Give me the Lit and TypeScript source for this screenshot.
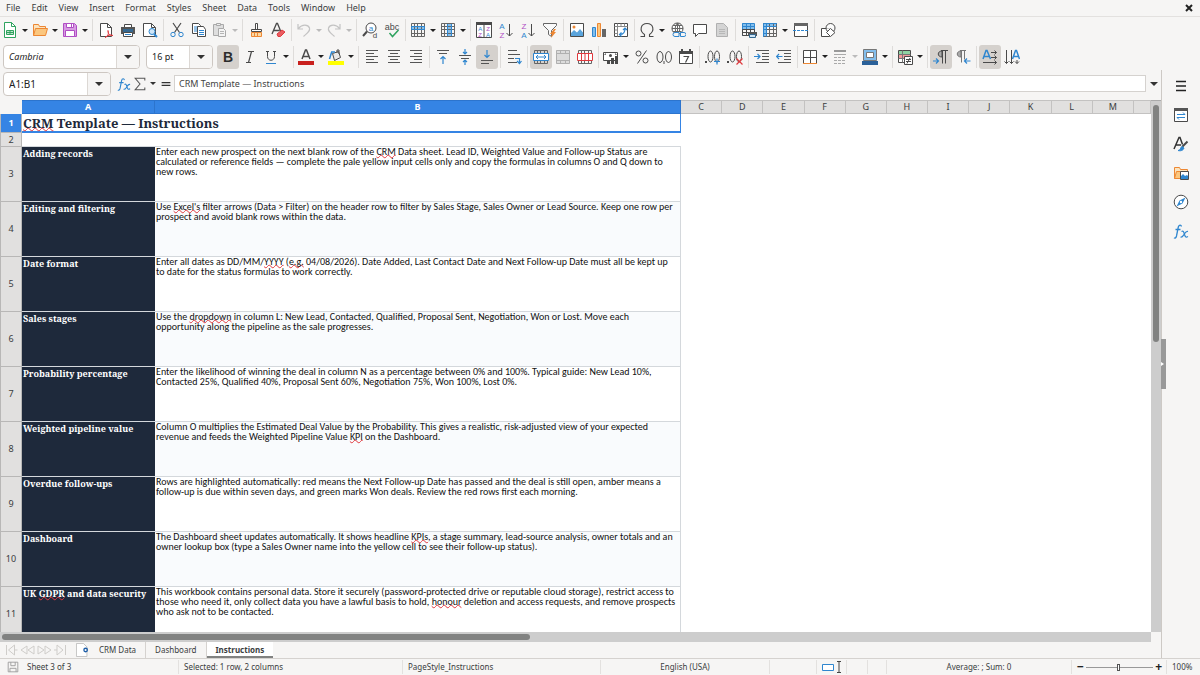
import { LitElement, html, css, svg, nothing } from "lit";
import { customElement, property } from "lit/decorators.js";
import { classMap } from "lit/directives/class-map.js";

const K = "#4a4a4a";
const B = "#2f86cf";
const L = "#83beec";
const P = "#b04ec4";
const O = "#ed8733";
const R = "#e0393e";
const G = "#2fa35f";

const line = (d: string, c = K, w = 1) =>
  svg`<path d=${d} fill="none" stroke=${c} stroke-width=${w} />`;
const fill = (d: string, c = K) => svg`<path d=${d} fill=${c} />`;
const shape = (d: string, f: string, c = K) =>
  svg`<path d=${d} fill=${f} stroke=${c} />`;
const grid = (c = "#666") =>
  line("M1.5 1.5h13v13h-13zM1.5 4.5h13M1.5 7.5h13M1.5 11.5h13M4.5 1.5v13M7.5 1.5v13M11.5 1.5v13", c);
const glyph = (t: string, x: number, y: number, s: number, c = K, weight = 400) =>
  svg`<text x=${x} y=${y} font-size=${s} fill=${c} font-family="Liberation Sans, sans-serif" font-weight=${weight} text-anchor="middle">${t}</text>`;

const ICONS: Record<string, unknown> = {
  new: [shape("M2.5.5h7l4 4v11h-11z", "#fff", G), line("M9.5.5v4h4", G), shape("M4.5 8.5h7v4h-7z", "#bfe6cc", G), line("M4.5 10.5h7M8 8.5v4", G)],
  open: [shape("M1.5 13.5v-11h5l1 2h6v2", "#fbe3bd", O), shape("M1.5 13.5l2-7h12l-2 7z", "#fbc77f", O)],
  save: [shape("M1.5 1.5h11l2 2v11h-13z", "#d79be2", P), shape("M4.5 1.5h7v4h-7z", "#fff", P), shape("M3.5 8.5h9v6h-9z", "#fff", P), line("M9.5 2v3", P)],
  pdf: [shape("M2.5 1.5h7l4 4v9h-11z", "#fff"), line("M9.5 1.5v4h4"), line("M7 15.5c3-1 4-4 3-7 0 4 2 5 5 5-3-1-5-.5-8 2z", R)],
  print: [shape("M4.5 2.5h7v3h-7z", "#fff"), fill("M1 5h14v7H1z", "#555"), fill("M3 7h10v3H3z", "#35688f"), shape("M3.5 10.5h9v4h-9z", "#fff"), line("M5 12.5h6", B)],
  preview: [shape("M1.5 1.5h8l4 4v9h-12z", "#fff"), line("M9.5 1.5v4h4"), svg`<circle cx="10" cy="9.5" r="3" fill="#cfe6f8" stroke=${B} />`, line("M12 12l3 3", B, 2)],
  cut: [line("M4 1l6.5 9.5M12 1L5.5 10.5", K, 1.2), svg`<circle cx="4" cy="12.5" r="2.2" fill="none" stroke=${B} /><circle cx="12" cy="12.5" r="2.2" fill="none" stroke=${B} />`],
  copy: [shape("M1.5 1.5h6l2 2v8h-8z", "#fff"), line("M3 5h4M3 7h4M3 9h3", B), shape("M6.5 4.5h6l2 3v7h-8z", "#fff"), line("M8 8.5h5M8 10.5h5M8 12.5h5", B)],
  paste: [shape("M1.5 2.5h10v11h-10z", "#dedede", "#a9a9a9"), shape("M4.5 1.5h4v2h-4z", "#eee", "#a9a9a9"), shape("M6.5 6.5h5l2 2v6h-7z", "#f4f4f4", "#a9a9a9"), line("M8 9.5h4M8 11.5h4", "#b5b5b5")],
  brush: [shape("M7.5 1.5h2v6h-2z", "#fff"), shape("M3.5 7.5h10v2h-10z", "#fff"), shape("M3.5 10.5v4h10v-4z", "#fbd9a5", O), line("M6.5 11v3M9.5 11v3", O)],
  clear: [line("M2 12L6.5 1.5h1L11 10M3.5 8.5h6", K, 1.3), shape("M7 12l5-4 3 2-4.5 4.5h-2.5z", "#ea5d61", R)],
  undo: [line("M2 2v5h5M2.5 6.5C6 2 12 2 13.5 6c.8 3-1.5 4.500-6 8.500", "#c3c3c3", 1.2)],
  redo: [line("M14 2v5H9M13.5 6.5C10 2 4 2 2.5 6c-.8 3 1.500 4.500 6 8.500", "#c3c3c3", 1.2)],
  find: [svg`<circle cx="9" cy="6" r="5" fill="#fff" stroke=${K} />`, line("M5 9.5L1 14", K, 2), glyph("a", 9, 8.5, 8, B), glyph("d", 13, 15.5, 8, K)],
  spell: [glyph("abc", 8, 7.5, 9, K), line("M5.5 11l3 3.5L14.5 8", G, 1.5)],
  row: [fill("M1 4h14v4H1z", L), grid(), line("M1.5 4.5h13v3h-13z", B)],
  col: [fill("M7 1h5v14H7z", L), grid(), line("M7.5 2v12M11.5 2v12", B)],
  sort: [shape("M.5.5h15v15H.5z", "#fff"), fill("M0 0h16v3H0z"), line("M8 1v14"), glyph("A", 4.2, 9, 6, B), glyph("Z", 4.2, 15, 6, P), glyph("Z", 12, 9, 6, P), glyph("A", 12, 15, 6, B)],
  asc: [glyph("A", 4, 7, 8, B), glyph("Z", 4, 15.5, 8, P), line("M11.5 2v12M8.5 11l3 3 3-3")],
  desc: [glyph("Z", 4, 7, 8, P), glyph("A", 4, 15.5, 8, B), line("M11.5 2v12M8.5 11l3 3 3-3")],
  filter: [shape("M1.5 1.5h13v2l-5 5v6l-3-2v-4l-5-5z", "#fafafa", "#666"), fill("M12 7l-4 5h2l-1 4 5-6h-2l2-3z", O)],
  image: [shape("M1.5 1.5h13v13h-13z", "#fff"), fill("M2 14v-3l3-3 3 2.5L11 7l3 3.5V14z", "#5aa4dc"), svg`<circle cx="5" cy="5" r="1.5" fill=${O} />`],
  chart: [shape("M1.5 5.5h3v9h-3z", L, B), shape("M6.5 1.5h3v13h-3z", "#fbc77f", O), fill("M11 7h4v8h-4z", "#666")],
  pivot: [shape("M1.5 1.5h13v13h-13z", "#fff"), line("M1.5 4.5h13M4.5 1.5v13M8 1.5v3M11.5 1.5v3M1.5 8h3M1.5 11.5h3", "#888"), line("M7 12.5c4 0 5-2 5-6M10 8l2-2 2 2M8.5 10.5l-2 2 2 2", B, 1.2)],
  omega: [line("M1.5 14.5h4v-2C0 9 1.5 1.5 8 1.5S16 9 10.5 12.5v2h4", K, 1.1)],
  link: [svg`<circle cx="7.5" cy="6.5" r="5.5" fill="#fff" stroke=${K} />`, line("M7.5 1v11M2 6.5h11M3 3.5h9M3 9.5h8M7.5 1c-3 3-3 8 0 11M7.5 1c3 3 3 8 0 11", "#666"), shape("M5 10.5h4v4H5a2 2 0 010-4zM10.500 10.500H14a2 2 0 010 4h-3.500z", "#f6f5f4", B)],
  comment: [shape("M1.5 2.5h13v9h-8l-3 3v-3h-2z", "#fff")],
  hf: [shape("M2.5 1.5h7l4 4v9h-11z", "#d4d4d4", "#b0b0b0"), line("M5 7.5h6M5 9.5h6M5 11.5h6", "#b8b8b8")],
  area: [fill("M1 1h12v6H1z", L), line("M1.5 1.5h12v12h-12zM1.5 4.5h12M5.5 1.5v12M9.5 1.5v12", B), line("M1.5 7.5h12v6h-12zM1.5 10.5h12M5.5 8v6M9.5 8v6"), fill("M7 10h9v4H7z", "#555"), shape("M8.5 12.5h6v3h-6z", "#cfe6f8", "#35688f")],
  freeze: [fill("M1 1h14v4H1z", L), fill("M1 1h4v14H1z", L), grid(), line("M1.5 15V1.5H15M1.5 4.5h13M4.5 1.5v13M1.5 7.5h3M1.5 11.5h3", B)],
  split: [shape("M1.5 1.5h13v13h-13z", "#fff"), fill("M1 1h14v3H1z", "#666"), svg`<path d="M0 8.5h16" stroke=${B} stroke-dasharray="3 1" />`],
  shapes: [shape("M1.5 6.5h8v8h-8z", "#fff"), svg`<circle cx="10.5" cy="6" r="4.5" fill="#fff" fill-opacity=".7" stroke=${K} />`, shape("M10.5 6.5l4.5 4-4.5 4-4-4z", "#fff")],
  bold: [glyph("B", 8, 13, 14, "#2c2c2c", 700)],
  italic: [line("M6 2.5h6M4 13.5h5M9.5 2.5l-3 11", K, 1.2)],
  under: [line("M4.5 2v5.500c0 5 7 5 7 0V2M3 2.500h3M10 2.500h3"), line("M3 14.5h10", B)],
  fcolor: [line("M4 10L7.5 1h1L12 10M5.2 7.5h5.6", K, 1.5), fill("M0 12h16v4H0z", "#c9211e")],
  bcolor: [shape("M4.5 4.5l6-2 2 6-6 3z", "#e8e8e8"), line("M9 4V1h2v4"), line("M3.5 3.5L1.5 10M3 3h4", B, 1.5), fill("M0 12h16v4H0z", "#ff0")],
  left: [line("M2 1.5h12M2 4.5h8M2 7.5h12M2 10.5h8M2 13.5h12", "#555")],
  center: [line("M2 1.5h12M4 4.5h8M2 7.5h12M4 10.5h8M2 13.5h12", "#555")],
  right: [line("M2 1.5h12M6 4.5h8M2 7.5h12M6 10.5h8M2 13.5h12", "#555")],
  top: [line("M2 1.5h12M4 4.5h8", "#555"), line("M8 15V7.5M5.5 10L8 7.5l2.5 2.5", B, 1.2)],
  middle: [line("M2 6.5h12M4 9.5h8", "#555"), line("M8 0v5M6 3l2 2 2-2M8 16v-5M6 13l2-2 2 2", B, 1.2)],
  bottom: [line("M2 11.5h12M2 14.5h8", "#555"), line("M8 1v7.5M5.5 6L8 8.5 10.5 6", B, 1.2)],
  wrap: [line("M2 1.5h9M2 5.5h12M2 9.5h6M2 13.5h9", "#555"), line("M9 9.5h4.5V14M11 12l2.5 2.5L15.5 12", B, 1.2)],
  merge: [grid(), shape("M.5 4.5h15v7H.5z", "#fff", B), line("M3 8h10M5 6L3 8l2 2M11 6l2 2-2 2", B)],
  mergec: [fill("M1 1h14v14H1z", "#dcdcdc"), line("M1.5 1.5h13v13h-13zM1.5 4.5h13M1.5 11.5h13M5.5 1.5v3M10.5 1.5v3M5.5 11.5v3M10.5 11.5v3", "#b0b0b0")],
  unmerge: [grid(), shape("M.5 4.5h15v7H.5z", "#fff", R), line("M4.5 4.5v7M8 4.5v7M11.5 4.5v7", R)],
  money: [shape("M.5 3.5h14v8H.5z", "#fff"), svg`<circle cx="7.5" cy="6.5" r="1.5" fill=${K} />`, line("M2 6V5h1M13 6V5h-1"), fill("M4 15h3v-3H4zM8 15h3V9H8zM12 15h3V7h-3z")],
  pct: [svg`<circle cx="4.500" cy="4.500" r="2.500" fill="none" stroke=${K} /><circle cx="11.500" cy="11.500" r="2.500" fill="none" stroke=${K} />`, line("M12.5 1.5l-9 13")],
  num: [svg`<ellipse cx="4" cy="8" rx="3" ry="5.5" fill="none" stroke=${K} /><ellipse cx="12.5" cy="8" rx="3" ry="5.5" fill="none" stroke=${K} />`, line("M8 12v3")],
  date: [shape("M1.5 3.5h13v11h-13z", "#fff"), fill("M1 2h14v3H1zM3 0h2v3H3zM11 0h2v3h-2z"), line("M5.5 7.5h5l-3 6", K, 1.2)],
  adddec: [svg`<ellipse cx="5.5" cy="7.5" rx="2.5" ry="5.5" fill="none" stroke=${K} /><ellipse cx="12" cy="7.5" rx="2.5" ry="5.5" fill="none" stroke=${K} />`, fill("M0 12h2v2H0z"), line("M9 12.5h6M12 9.5v6", B, 1.2)],
  deldec: [svg`<ellipse cx="5.5" cy="7.5" rx="2.5" ry="5.5" fill="none" stroke=${K} /><ellipse cx="12" cy="7.5" rx="2.5" ry="5.5" fill="none" stroke=${K} />`, fill("M0 12h2v2H0z"), line("M9.5 9.5l6 6M15.5 9.5l-6 6", R, 1.2)],
  indent: [line("M2 1.5h13M8 4.5h7M8 7.5h7M8 10.5h7M2 13.5h13", "#555"), line("M0 7.5h6M3.5 5L6 7.5 3.5 10", B, 1.2)],
  outdent: [line("M2 1.5h13M8 4.5h7M8 7.5h7M8 10.5h7M2 13.5h13", "#555"), line("M6.5 7.5h-6M3 5L.5 7.5 3 10", B, 1.2)],
  borders: [shape("M1.5 1.5h13v13h-13z", "#fff"), line("M8.500 1.5v13M1.5 8.500h13"), line("M1 14.5h14", O)],
  bstyle: [line("M2 2h12", "#999", 2), line("M2 5.5h12", "#aaa"), svg`<path d="M2 8.5h12M2 11.5h12M2 14.5h12" stroke="#aaa" stroke-dasharray="3 1" />`],
  blcolor: [shape("M1.5.5h13v11h-13z", L, "#777"), shape("M4.5 3.5h7v5h-7z", "#fff", "#777"), fill("M0 12h16v4H0z", "#2a6099")],
  cond: [shape("M1.5 1.5h12v12h-12z", "#fff"), fill("M2 2h11v3H2z", "#8fd3a3"), fill("M2 6h11v3H2z", "#f29a9c"), line("M1.5 5.5h12M1.5 9.5h12M5.5 1.5v12", "#777"), shape("M7.5 7.5h8v8h-8z", "#fff"), line("M9 10.5h5M9 12.5h5M13 9l-3 5.5")],
  ltr: [svg`<path d="M9 2v6C4 8 4 2 9 2z" fill="#aaa" stroke=${K} />`, line("M9.500 1.5v13M12.5 1.5v13M8 1.5h7"), line("M0 12h5.5M3 9.5L5.5 12 3 14.5", B, 1.2)],
  rtl: [svg`<path d="M6 2v6C1 8 1 2 6 2z" fill="#aaa" stroke="#777" />`, line("M6.500 1.5v12M9.5 1.5v9M5 1.5h6", "#777"), line("M15.5 12H9.5M12 9.5L9.5 12l2.5 2.5", B, 1.2)],
  horiz: [line("M1 10L4 1.5h1L8.5 10M2.5 7.5h4.5", B, 1.5), line("M9 3.5h5.5M12.5 1.5l2 2-2 2M9 8.5h5.5M12.5 6.5l2 2-2 2M1 13.5h13.5M12.5 11.5l2 2-2 2")],
  vert: [line("M8.5 10L11.5 1.5h1L15.5 10M10 7.5h4.5", B, 1.5), line("M2.5 1v13.5M.5 12.5l2 2 2-2M7.500 1v13.5M5.5 12.5l2 2 2-2M13 11v3.5M11 12.5l2 2 2-2")],
  fx: [line("M8.5 3.5c-.5-2-2.500-2-3.200.5L3.500 13c-.5 2-1.500 2.500-2.500 1.800M2.500 6.500h5", B, 1.3), line("M8.500 8.500c2-1 2 0 3 3s1.500 3 3.500 2M15 8.500c-2-.5-3 1.500-4 3s-1.500 3-3.500 2.500", B, 1.2)],
  sum: [line("M13.5 4V1.5h-11L8 8l-5.5 6.5h11V12", "#555", 1.2)],
  equal: [line("M3 6.5h10M3 9.5h10", "#333", 1.5)],
  menu: [line("M3 3.5h10M3 8h10M3 12.5h10", "#222", 1.5)],
  props: [shape("M1.5 1.5h13v13h-13z", "#fff"), fill("M1 1h14v3H1z", "#555"), line("M4 7.5h8M10 5.5l2 2M4 10.5h8M6 12.5l-2-2", B)],
  styles: [line("M1 13L6 1.5h1l2.5 7M3 9h5", "#333", 1.5), line("M14.5 5.5L9 11", K, 2), shape("M5 14.5c3 0 2-3 4-4l2 1.5c-1 3-4 3-6 2.5z", B, B)],
  gallery: [shape("M1.5 13.5v-11h5l1 2h7v3", "#fbe3bd", O), shape("M1.5 13.5l2-7h5v7z", "#fbc77f", O), shape("M7.5 6.5h8v8h-8z", "#fff"), fill("M8 14v-3l2-2 2 2 2-1 1 1v3z", B)],
  compass: [svg`<circle cx="8" cy="8" r="6.8" fill="#fff" stroke=${K} />`, fill("M12.5 3.5L9.5 9.5l-6 3 3-6z", B), svg`<circle cx="8" cy="8" r="1.2" fill="#fff" />`],
  addsheet: [shape("M.5.5h8l4 4v11H.5z", "#fff", "#bbb"), svg`<circle cx="11" cy="8" r="2" fill="none" stroke="#1f5fa8" stroke-width="1.5" />`],
  disk: [line("M2.5 2.5h11v11h-11zM5.5 2.5v4h5v-4M4.5 13.5v-4h7v4", "#999")],
  close: [line("M5 5l6 6M11 5l-6 6", "#222", 2)],
};

const icon = (n: string) => html`<svg class="icon" viewBox="0 0 16 16" aria-hidden="true">${ICONS[n]}</svg>`;

@customElement("tool-bar")
class ToolBar extends LitElement {
  @property() items = "";

  static styles = css`
    :host { display: flex; align-items: center; height: 27px; }
    button { display: flex; align-items: center; justify-content: center; width: 22px; height: 24px; padding: 0; border: 0; border-radius: 3px; background: none; }
    .on { background: #d5d1cd; }
    .icon { width: 16px; height: 16px; display: block; flex: none; }
    .drop { width: 30px; justify-content: flex-start; }
    .drop .icon { margin: 0 2px; }
    .arrow { width: 0; margin-left: 2px; border: 3px solid transparent; border-top: 3px solid #222; border-bottom: 0; }
    .faded .arrow { border-top-color: #bbb; }
    .sep { width: 1px; height: 22px; margin: 0 2px; background: #dedcda; }
  `;

  render() {
    return this.items.split(" ").map((t) => {
      if (t === "|") return html`<span class="sep"></span>`;
      const name = t.replace(/[*!~]/g, "");
      const drop = t.includes("*");
      return html`<button
        aria-label=${name}
        class=${classMap({ drop, on: t.includes("!"), faded: t.includes("~") })}
      >${icon(name)}${drop ? html`<span class="arrow"></span>` : nothing}</button>`;
    });
  }
}

const sp = (t: string) => html`<span class="miss">${t}</span>`;

const ROWS: [unknown, unknown[]][] = [
  ["Adding records", [
    html`Enter each new prospect on the next blank row of the ${sp("CRM")} Data sheet. Lead ID, Weighted Value and Follow-up Status are`,
    "calculated or reference fields — complete the pale yellow input cells only and copy the formulas in columns O and Q down to",
    "new rows."]],
  ["Editing and filtering", [
    html`Use ${sp("Excel's")} filter arrows (Data > Filter) on the header row to filter by Sales Stage, Sales Owner or Lead Source. Keep one row per`,
    "prospect and avoid blank rows within the data."]],
  ["Date format", [
    html`Enter all dates as DD/MM/${sp("YYYY")} (${sp("e.g.")} 04/08/2026). Date Added, Last Contact Date and Next Follow-up Date must all be kept up`,
    "to date for the status formulas to work correctly."]],
  ["Sales stages", [
    html`Use the ${sp("dropdown")} in column L: New Lead, Contacted, Qualified, Proposal Sent, Negotiation, Won or Lost. Move each`,
    "opportunity along the pipeline as the sale progresses."]],
  ["Probability percentage", [
    "Enter the likelihood of winning the deal in column N as a percentage between 0% and 100%. Typical guide: New Lead 10%,",
    "Contacted 25%, Qualified 40%, Proposal Sent 60%, Negotiation 75%, Won 100%, Lost 0%."]],
  ["Weighted pipeline value", [
    "Column O multiplies the Estimated Deal Value by the Probability. This gives a realistic, risk-adjusted view of your expected",
    html`revenue and feeds the Weighted Pipeline Value ${sp("KPI")} on the Dashboard.`]],
  ["Overdue follow-ups", [
    "Rows are highlighted automatically: red means the Next Follow-up Date has passed and the deal is still open, amber means a",
    "follow-up is due within seven days, and green marks Won deals. Review the red rows first each morning."]],
  ["Dashboard", [
    html`The Dashboard sheet updates automatically. It shows headline ${sp("KPIs")}, a stage summary, lead-source analysis, owner totals and an`,
    "owner lookup box (type a Sales Owner name into the yellow cell to see their follow-up status)."]],
  [html`UK ${sp("GDPR")} and data security`, [
    "This workbook contains personal data. Store it securely (password-protected drive or reputable cloud storage), restrict access to",
    html`those who need it, only collect data you have a lawful basis to hold, ${sp("honour")} deletion and access requests, and remove prospects`,
    "who ask not to be contacted."]],
];

@customElement("app-root")
class AppRoot extends LitElement {
  static styles = css`
    :host { display: flex; flex-direction: column; height: 100vh; overflow: hidden; background: #f6f5f4; color: #3a3d3e; font: 9px/12px "Noto Sans", sans-serif; }
    * { box-sizing: border-box; }
    button, input { font: inherit; color: inherit; }
    button { padding: 0; border: 0; background: none; }
    .icon { width: 16px; height: 16px; display: block; flex: none; }
    .menu { display: flex; align-items: center; gap: 11px; height: 17px; flex: none; padding: 0 3px 0 6px; border-bottom: 1px solid #e3e1df; }
    .close { margin-left: auto; }
    .top { height: 26px; }
    .format { display: flex; align-items: center; height: 27px; }
    .tri { width: 0; border: 4px solid transparent; border-top: 4px solid #333; border-bottom: 0; }
    .combo { display: flex; height: 24px; border: 1px solid #cdc7c2; border-radius: 4px; background: #fff; overflow: hidden; flex: none; }
    .combo input { flex: 1; min-width: 0; border: 0; padding: 0 5px; background: none; color: #222; }
    .combo button { width: 23px; display: flex; align-items: center; justify-content: center; border-left: 1px solid #dcd8d4; background: #f6f5f4; }
    .font { width: 137px; margin-left: 3px; }
    .font input { font-style: italic; }
    .size { width: 67px; margin: 0 4px 0 6px; }
    .cell { width: 108px; margin-left: 3px; }
    .cell input { font-size: 10px; }
    .body { display: flex; flex: 1; min-height: 0; }
    .main { display: flex; flex-direction: column; flex: 1; min-width: 0; }
    .formula { display: flex; align-items: center; height: 27px; flex: none; }
    .formula .tools { display: flex; align-items: center; margin-left: 5px; }
    .formula .tools .icon { height: 14px; }
    .formula .tools .tri { margin: 0 2px; border-width: 3px; border-bottom: 0; }
    .line { flex: 1; min-width: 0; height: 17px; margin-right: 1px; padding: 0 4px; border: 1px solid #d5d2cf; background: #fff; color: #444; }
    .more { width: 14px; display: flex; justify-content: center; }
    .view { display: flex; flex: 1; min-height: 0; margin-top: 3px; }
    .sheet { flex: 1; min-width: 0; overflow: hidden; background: #fff; }
    table { width: 100%; table-layout: fixed; border-collapse: separate; border-spacing: 0; }
    th, td { padding: 0; }
    thead th { height: 14px; background: #e1e0df; border: solid #c3c2c1; border-width: 1px 1px 1px 0; font-weight: 400; line-height: 12px; }
    thead th.sel { background: #3584e4; border-color: #2c74cd; color: #fff; font-weight: 700; }
    thead th.corner { background: #f6f5f4; border: 0; }
    .h { width: 22px; } .a { width: 133px; } .b { width: 526px; } .rest { width: 17px; }
    .num { background: #e1e0df; border: solid #b8b7b6; border-width: 0 1px 1px; font-weight: 400; text-align: center; }
    .num.sel { background: #3584e4; color: #fff; font-weight: 700; }
    .title { height: 19px; padding: 1px 0 0 1px; font: 700 13px/16px "Noto Serif", "DejaVu Serif Condensed", serif; color: #1e293b; border: solid #3584e4; border-width: 0 1px 2px 0; vertical-align: top; }
    .gap { height: 14px; border-bottom: 1px solid #d4d8dc; }
    tbody .row > * { height: 55px; }
    .label { padding-left: 1px; background: #1e293b; color: #fff; border-bottom: 1px solid #d4d8dc; text-align: left; vertical-align: top; font: 700 9px/13px "Noto Serif", "DejaVu Serif Condensed", serif; white-space: nowrap; }
    .text { border: solid #d4d8dc; border-width: 0 1px 1px 0; padding-left: 1px; vertical-align: top; color: #111; font: 10px/10px Carlito, Lato, sans-serif; }
    .text div { white-space: nowrap; }
    .even .text { background: #f9fbfd; }
    .miss { text-decoration: underline wavy #e0393e 1px; text-underline-offset: -1px; text-decoration-skip-ink: none; }
    .vbar { width: 10px; background: #cdcdcd; border-top: 1px solid #aaa; padding: 4px 2px 0; }
    .vbar div { height: 45%; border-radius: 3px; background: #818281; }
    .hbar { height: 10px; flex: none; background: #cdcdcd; margin-right: 10px; padding: 2px; }
    .hbar div { width: 46%; height: 6px; border-radius: 3px; background: #818281; }
    .tabs { display: flex; align-items: center; height: 16px; flex: none; font-size: 8px; }
    .nav { width: 62px; height: 12px; margin: 0 9px 0 5px; }
    .tabs .add .icon { width: 14px; height: 14px; }
    .tabs .tab { position: relative; height: 16px; padding: 0 9px; }
    .tabs .tab + .tab { border-left: 1px solid #d5d2cf; }
    .tabs .tab.on { background: #fff; box-shadow: inset 0 -2px #818281; font-weight: 700; }
    .side { position: relative; display: flex; flex-direction: column; gap: 13px; width: 39px; padding: 8px 0 0 11px; border-left: 1px solid #cdc9c5; }
    .handle { position: absolute; left: -1px; top: 269px; width: 5px; height: 50px; background: #999; display: flex; align-items: center; }
    .handle span { border: 2px solid transparent; border-left: 3px solid #fff; border-right: 0; }
    .status { display: grid; grid-template-columns: 22px 157fr 224fr 198fr 169fr 47fr 30fr 21fr 19fr 185fr 95px 33px; align-items: center; height: 17px; flex: none; border-top: 1px solid #d5d2cf; font-size: 8px; }
    .status > * { height: 14px; line-height: 14px; padding-left: 5px; border-right: 1px solid #e3e1df; white-space: nowrap; }
    .status .mid { text-align: center; padding: 0; }
    .status .bare { border: 0; }
    .status .bare .icon { height: 14px; }
    .mode { display: flex; align-items: center; }
    .mode svg { width: 22px; height: 12px; }
    .status .zoom { display: flex; align-items: center; gap: 2px; padding-right: 4px; font-size: 12px; font-weight: 700; color: #222; }
    .zoom input { appearance: none; flex: 1; min-width: 0; height: 10px; margin: 0; background: linear-gradient(#999, #999) center / 100% 1px no-repeat; }
    .zoom input::-webkit-slider-thumb { appearance: none; width: 3px; height: 7px; border: 1px solid #555; background: #fff; }
  `;

  render() {
    const menus = "File Edit View Insert Format Styles Sheet Data Tools Window Help".split(" ");
    const combo = (cls: string, label: string, value: string) => html`
      <div class="combo ${cls}"><input aria-label=${label} .value=${value} /><button aria-label="Open ${label}"><span class="tri"></span></button></div>`;
    return html`
      <nav class="menu">${menus.map((m) => html`<button>${m}</button>`)}<button class="close" aria-label="Close">${icon("close")}</button></nav>
      <tool-bar class="top" items="new* open* save* | pdf print preview | cut copy paste*~ | brush clear | undo*~ redo*~ | find spell | row* col* | sort asc desc filter | image chart pivot | omega* link comment hf | area freeze* split | shapes"></tool-bar>
      <div class="format">
        ${combo("font", "Font name", "Cambria")}${combo("size", "Font size", "16 pt")}
        <tool-bar items="bold! italic under* | fcolor* bcolor* | left center right | top middle bottom! | wrap | merge! mergec unmerge | money* pct num date | adddec deldec | indent outdent | borders* bstyle*~ blcolor* | cond* | ltr! rtl | horiz! vert"></tool-bar>
      </div>
      <div class="body">
        <div class="main">
          <div class="formula">
            ${combo("cell", "Name box", "A1:B1")}
            <div class="tools">${icon("fx")}${icon("sum")}<span class="tri"></span>${icon("equal")}</div>
            <input class="line" aria-label="Formula" .value=${"CRM Template — Instructions"} />
            <button class="more" aria-label="Expand formula bar"><span class="tri"></span></button>
          </div>
          <div class="view">
            <div class="sheet">
              <table>
                <thead><tr>
                  <th class="h corner"></th><th class="a sel">A</th><th class="b sel">B</th>
                  ${"CDEFGHIJKLM".split("").map((c) => html`<th>${c}</th>`)}<th class="rest"></th>
                </tr></thead>
                <tbody>
                  <tr><th class="num sel">1</th><td class="title" colspan="2">${sp("CRM")} Template — Instructions</td><td colspan="12"></td></tr>
                  <tr><th class="num">2</th><td class="gap" colspan="2"></td><td colspan="12"></td></tr>
                  ${ROWS.map(([label, lines], i) => html`
                    <tr class="row ${i % 2 ? "even" : ""}">
                      <th class="num">${i + 3}</th><th class="label">${label}</th>
                      <td class="text">${lines.map((l) => html`<div>${l}</div>`)}</td><td colspan="12"></td>
                    </tr>`)}
                </tbody>
              </table>
            </div>
            <div class="vbar"><div></div></div>
          </div>
          <div class="hbar"><div></div></div>
          <div class="tabs">
            <svg class="nav" viewBox="0 0 62 12"><path d="M1.5 1v10M3.5 6l6-5v10zM9.5 6h3M16 6l6-4v8zM23 6l6-4v8zM33 2l6 4-6 4zM40 2l6 4-6 4zM49 6h3M52 1l6 5-6 5zM60.5 1v10" fill="none" stroke="#cfcdca" /></svg>
            <button class="add" aria-label="Add sheet">${icon("addsheet")}</button>
            <button class="tab">CRM Data</button><button class="tab">Dashboard</button><button class="tab on">Instructions</button>
          </div>
        </div>
        <aside class="side">
          ${["menu", "props", "styles", "gallery", "compass", "fx"].map((n) => html`<button aria-label=${n}>${icon(n)}</button>`)}
          <div class="handle"><span></span></div>
        </aside>
      </div>
      <footer class="status">
        <span class="bare">${icon("disk")}</span><span>Sheet 3 of 3</span><span>Selected: 1 row, 2 columns</span><span>PageStyle_Instructions</span>
        <span class="mid">English (USA)</span><span></span>
        <span class="mode"><svg viewBox="0 0 22 12"><path d="M.5 3.5h11v6H.5z" fill="#fff" stroke="#2f86cf" /><path d="M15 .5h4M15 11.5h4M17 .5v11" stroke="#444" /></svg></span>
        <span></span><span></span><span class="mid">Average: ; Sum: 0</span>
        <span class="zoom"><span>−</span><input type="range" aria-label="Zoom" min="0" max="100" value="48" /><span>+</span></span>
        <span class="bare">100%</span>
      </footer>`;
  }
}
